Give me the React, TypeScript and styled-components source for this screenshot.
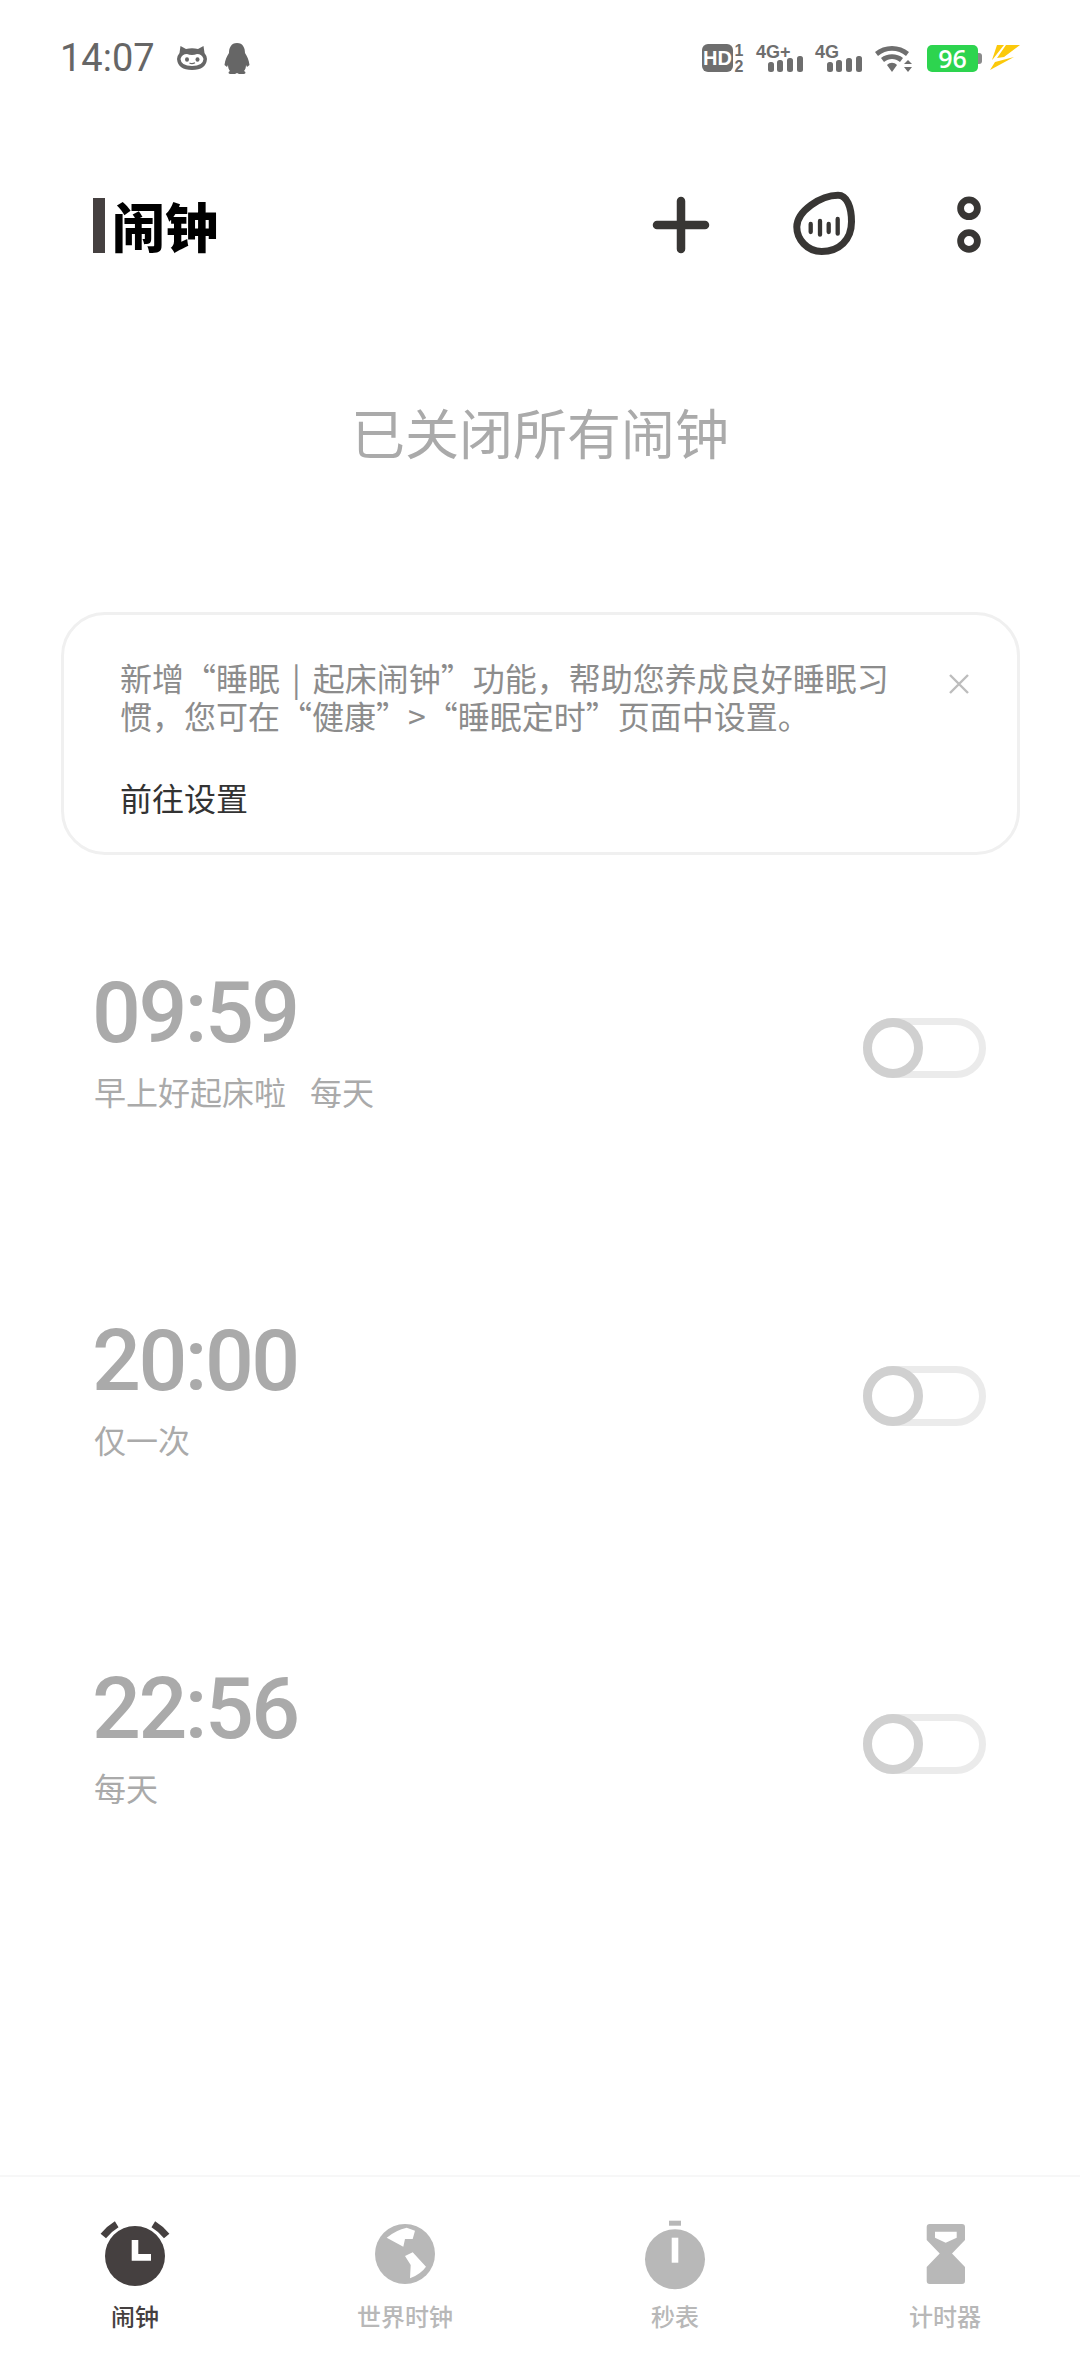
import styled, { createGlobalStyle } from 'styled-components';

const GlobalStyle = createGlobalStyle`
  html, body {
    margin: 0;
    padding: 0;
    background: #fff;
  }
  body {
    font-family: 'Noto Sans CJK SC', 'Noto Sans', sans-serif;
  }
`;

const alarms = [
  { time: '09:59', label: '早上好起床啦', repeat: '每天' },
  { time: '20:00', label: '仅一次', repeat: '' },
  { time: '22:56', label: '每天', repeat: '' },
];

function StatusIcons() {
  return (
    <StatusRight>
      <svg width="42" height="30" viewBox="0 0 42 30">
        <rect x="0" y="1" width="31" height="28" rx="6" fill="#6e6e6e" />
        <HdText x="15.5" y="22">HD</HdText>
        <SimText x="37" y="13">1</SimText>
        <SimText x="37" y="29">2</SimText>
      </svg>
      <SignalIcon label="4G+" />
      <SignalIcon label="4G" />
      <svg width="38" height="30" viewBox="0 0 38 30">
        <path d="M1 9 C10 1 26 1 35 9 L32 13 C24 6 12 6 4 13 Z" fill="#6e6e6e" />
        <path d="M7 15 C13 10 23 10 29 15 L26 19 C21 15 15 15 10 19 Z" fill="#6e6e6e" />
        <path d="M13 22 C16 19 20 19 23 22 L18 29 Z" fill="#6e6e6e" />
        <path d="M34 17 L38 21 L30 21 Z M30 24 L38 24 L34 29 Z" fill="#6e6e6e" />
      </svg>
      <BatteryBox>
        <BatteryBody>96</BatteryBody>
        <BatteryNub />
      </BatteryBox>
      <svg width="30" height="26" viewBox="0 0 30 26">
        <path d="M7 0 H14 L3 14 L2 15 Z M16 0 H30 L14 12 L7 13 Z" fill="#fbc90b" />
        <path d="M5 17 L24 12 L0 25 Z" fill="#fbc90b" />
      </svg>
    </StatusRight>
  );
}

function SignalIcon({ label }: { label: string }) {
  return (
    <svg width="47" height="30" viewBox="0 0 47 30">
      <SignalText x="0" y="15">{label}</SignalText>
      <rect x="12" y="19" width="6" height="10" rx="2.5" fill="#6e6e6e" />
      <rect x="21" y="17" width="6" height="12" rx="2.5" fill="#6e6e6e" />
      <rect x="31" y="15" width="6" height="14" rx="2.5" fill="#6e6e6e" />
      <rect x="41" y="13" width="6" height="16" rx="2.5" fill="#6e6e6e" />
    </svg>
  );
}

function AlarmIcon() {
  return (
    <svg width="72" height="72" viewBox="0 0 72 72">
      <circle cx="36" cy="36" r="30" fill="#454040" />
      <path d="M4.3 16 Q10 9 17.7 4.3 M67.7 16 Q62 9 54.3 4.3" stroke="#454040" strokeWidth="7" fill="none" />
      <path d="M32.7 20 H39.3 V34 H52 V40.7 H32.7 Z" fill="#fff" />
    </svg>
  );
}

function GlobeIcon() {
  return (
    <svg width="72" height="72" viewBox="0 0 72 72">
      <circle cx="36" cy="34" r="30" fill="#b8b8b8" />
      <path d="M17.7 17.7 Q27 10 37.7 7.7 L46 10.7 L43.7 19 L36 19 L34.3 26.7 Z" fill="#fff" />
      <path d="M36 36 L43.7 32.3 L57 46.7 Q52 54 41 58.3 L41.7 45 Z" fill="#fff" />
    </svg>
  );
}

function StopwatchIcon() {
  return (
    <svg width="72" height="72" viewBox="0 0 72 72">
      <rect x="30" y="0.7" width="12" height="5" fill="#b8b8b8" />
      <circle cx="36" cy="39.3" r="30" fill="#b8b8b8" />
      <rect x="32.7" y="17.7" width="6.6" height="25" fill="#fff" />
    </svg>
  );
}

function HourglassIcon() {
  return (
    <svg width="72" height="72" viewBox="0 0 72 72">
      <path
        fillRule="evenodd"
        d="M20.7 4 H53 Q56 4 56 7 V20 L43 33.5 L56 47 V61 Q56 64 53 64 H20.7 Q17.7 64 17.7 61 V47 L30.7 33.5 L17.7 20 V7 Q17.7 4 20.7 4 Z M26 11.7 V17.7 L36.7 22.7 L47.7 17.7 V11.7 Z"
        fill="#b8b8b8"
      />
    </svg>
  );
}

const tabs = [
  { name: '闹钟', icon: <AlarmIcon />, active: true },
  { name: '世界时钟', icon: <GlobeIcon />, active: false },
  { name: '秒表', icon: <StopwatchIcon />, active: false },
  { name: '计时器', icon: <HourglassIcon />, active: false },
];

export default function App() {
  return (
    <Page>
      <GlobalStyle />
      <StatusBar>
        <StatusLeft>
          <Clock>14:07</Clock>
          <svg width="30" height="26" viewBox="0 0 30 26">
            <path
              d="M3.5 1 L9 4 Q15 2.5 21 4 L26.5 1 L27.5 8 Q30 11 30 14 Q29 25 15 25 Q1 25 0 14 Q0 11 2.5 8 Z"
              fill="#666"
            />
            <path d="M3.5 14 Q5 9 10 9 Q15 11 20 9 Q25 9 26.5 14 Q26 21 15 21 Q4 21 3.5 14 Z" fill="#fff" />
            <ellipse cx="10" cy="14.5" rx="2" ry="2.2" fill="#666" />
            <ellipse cx="20.5" cy="14.5" rx="2" ry="2.2" fill="#666" />
            <path d="M12.5 18 Q15 19.5 18 17.8" stroke="#666" strokeWidth="1.3" fill="none" />
          </svg>
          <svg width="26" height="31" viewBox="0 0 26 31">
            <path
              d="M13 0 C19 0 21 5 21 10 C23 13 25 17 25.5 22 L23 24 L22 22 C22 25 21 27 20 28 C22 29 22 30.5 20 31 H15 L13 30 L11 31 H6 C4 30.5 4 29 6 28 C5 27 4 25 4 22 L3 24 L0.5 22 C1 17 3 13 5 10 C5 5 7 0 13 0 Z"
              fill="#666"
            />
          </svg>
        </StatusLeft>
        <StatusIcons />
      </StatusBar>

      <Header>
        <TitleGroup>
          <TitleBar />
          <Title>闹钟</Title>
        </TitleGroup>
        <Actions>
          <ActionIcon $gap={0} width="58" height="64" viewBox="0 0 58 64">
            <path d="M29 8 V56 M5 32 H53" stroke="#383634" strokeWidth="8.5" strokeLinecap="round" />
          </ActionIcon>
          <ActionIcon $gap={83} width="64" height="64" viewBox="0 0 64 64">
            <path
              d="M45 2.2 C54 2.2 58.5 14 58.5 28.7 C58.5 47 46 58.5 28.7 58.5 C14 58.5 3.8 46 3.8 34 C3.8 18 28 2.2 45 2.2 Z"
              fill="none"
              stroke="#383634"
              strokeWidth="7"
            />
            <path
              d="M17.7 31 V39 M27 28 V41.7 M35.7 31 V39 M44.7 26 V40.7"
              stroke="#383634"
              strokeWidth="4.3"
              strokeLinecap="round"
            />
          </ActionIcon>
          <ActionIcon $gap={100} width="24" height="64" viewBox="0 0 24 64">
            <circle cx="12" cy="15.3" r="8.4" fill="none" stroke="#383634" strokeWidth="6.8" />
            <circle cx="12" cy="48" r="8.4" fill="none" stroke="#383634" strokeWidth="6.8" />
          </ActionIcon>
        </Actions>
      </Header>

      <EmptyHint>已关闭所有闹钟</EmptyHint>

      <NoticeCard>
        <NoticeBody>
          <NoticeText>
            新增“睡眠<Divider>|</Divider>起床闹钟”功能，帮助您养成良好睡眠习
            <br />
            惯，您可在“健康”&gt;“睡眠定时”页面中设置。
          </NoticeText>
          <CloseIcon width="22" height="20" viewBox="0 0 22 20">
            <path d="M2 1 L20 19 M20 1 L2 19" stroke="#bdbdbd" strokeWidth="2.4" />
          </CloseIcon>
        </NoticeBody>
        <NoticeLink>前往设置</NoticeLink>
      </NoticeCard>

      <AlarmList>
        {alarms.map((a) => (
          <AlarmRow key={a.time}>
            <AlarmInfo>
              <AlarmTime>{a.time}</AlarmTime>
              <AlarmLabel>
                <span>{a.label}</span>
                {a.repeat && <span>{a.repeat}</span>}
              </AlarmLabel>
            </AlarmInfo>
            <Toggle>
              <ToggleKnob />
            </Toggle>
          </AlarmRow>
        ))}
      </AlarmList>

      <TabBar>
        {tabs.map((t) => (
          <Tab key={t.name}>
            {t.icon}
            <TabLabel $active={t.active}>{t.name}</TabLabel>
          </Tab>
        ))}
      </TabBar>
    </Page>
  );
}

const Page = styled.div`
  width: 1080px;
  height: 2376px;
  display: flex;
  flex-direction: column;
  overflow: hidden;
  background: #fff;
`;

const StatusBar = styled.div`
  height: 30px;
  margin-top: 43px;
  padding: 0 60px;
  display: flex;
  justify-content: space-between;
  align-items: center;
`;

const StatusLeft = styled.div`
  display: flex;
  align-items: center;
  gap: 17px;
`;

const Clock = styled.span`
  font-family: Roboto, sans-serif;
  font-size: 38px;
  line-height: 30px;
  color: #666;
  margin-right: 5px;
`;

const StatusRight = styled.div`
  display: flex;
  align-items: center;
  gap: 12px;

  svg {
    overflow: visible;
  }
`;

const HdText = styled.text`
  font-family: 'Liberation Sans', sans-serif;
  font-size: 20px;
  font-weight: 700;
  fill: #fff;
  text-anchor: middle;
`;

const SimText = styled.text`
  font-family: 'Liberation Sans', sans-serif;
  font-size: 16px;
  font-weight: 700;
  fill: #6e6e6e;
  text-anchor: middle;
`;

const SignalText = styled.text`
  font-family: 'Liberation Sans', sans-serif;
  font-size: 18px;
  font-weight: 700;
  fill: #6e6e6e;
`;

const BatteryBox = styled.div`
  display: flex;
  align-items: center;
  margin: 0 -4px 0 3px;
`;

const BatteryBody = styled.div`
  width: 51px;
  height: 27px;
  border-radius: 5px;
  background: #2dd44f;
  color: #fff;
  font-family: 'Open Sans', sans-serif;
  font-size: 25px;
  font-weight: 600;
  line-height: 27px;
  text-align: center;
`;

const BatteryNub = styled.div`
  width: 4px;
  height: 11px;
  border-radius: 0 3px 3px 0;
  background: #8a8a8a;
`;

const Header = styled.div`
  height: 64px;
  margin-top: 120px;
  padding: 0 99px 0 93px;
  display: flex;
  justify-content: space-between;
  align-items: center;
`;

const TitleGroup = styled.div`
  display: flex;
  align-items: center;
  gap: 7px;
`;

const TitleBar = styled.div`
  width: 12px;
  height: 55px;
  background: #454040;
`;

const Title = styled.h1`
  margin: 0;
  font-size: 53px;
  font-weight: 900;
  line-height: 64px;
  color: #000;
`;

const Actions = styled.div`
  display: flex;
  align-items: center;
`;

const ActionIcon = styled.svg<{ $gap: number }>`
  margin-left: ${(p) => p.$gap}px;
  overflow: visible;
`;

const EmptyHint = styled.div`
  margin-top: 137px;
  height: 76px;
  font-size: 54px;
  line-height: 76px;
  text-align: center;
  color: #aaa;
`;

const NoticeCard = styled.div`
  margin: 142px 60px 0 61px;
  padding: 43px 47px 36px 56px;
  border: 3px solid #f0f0f0;
  border-radius: 44px;
`;

const NoticeBody = styled.div`
  display: flex;
  justify-content: space-between;
  align-items: flex-start;
`;

const NoticeText = styled.div`
  font-size: 32px;
  line-height: 38px;
  color: #8c8c8c;
`;

const Divider = styled.span`
  margin: 0 12px;
`;

const CloseIcon = styled.svg`
  margin-top: 16px;
`;

const NoticeLink = styled.div`
  margin-top: 44px;
  font-size: 32px;
  line-height: 38px;
  color: #333;
`;

const AlarmList = styled.div`
  margin-top: 19px;
  padding: 0 94px;
  display: flex;
  flex-direction: column;
`;

const AlarmRow = styled.div`
  height: 348px;
  display: flex;
  justify-content: space-between;
  align-items: center;
`;

const AlarmInfo = styled.div`
  margin-top: -17px;
`;

const AlarmTime = styled.div`
  margin-left: -2px;
  font-family: Roboto, sans-serif;
  font-size: 86px;
  font-weight: 500;
  line-height: 90px;
  letter-spacing: -2.5px;
  color: #aaa;
`;

const AlarmLabel = styled.div`
  margin-top: 13px;
  display: flex;
  gap: 24px;
  font-size: 32px;
  line-height: 40px;
  color: #aaa;
`;

const Toggle = styled.div`
  position: relative;
  box-sizing: border-box;
  width: 123px;
  height: 60px;
  border: 7px solid #ebebeb;
  border-radius: 30px;
`;

const ToggleKnob = styled.div`
  position: absolute;
  top: -7px;
  left: -7px;
  box-sizing: border-box;
  width: 60px;
  height: 60px;
  border: 9px solid #d0d0d0;
  border-radius: 50%;
  background: #fff;
`;

const TabBar = styled.div`
  margin-top: auto;
  height: 201px;
  padding-top: 43px;
  box-sizing: border-box;
  border-top: 2px solid #f7f7f7;
  display: grid;
  grid-template-columns: repeat(4, 270px);
`;

const Tab = styled.div`
  display: flex;
  flex-direction: column;
  align-items: center;
`;

const TabLabel = styled.span<{ $active: boolean }>`
  margin-top: 7px;
  font-size: 24px;
  font-weight: 500;
  line-height: 34px;
  color: ${(p) => (p.$active ? '#454040' : '#b8b8b8')};
`;
